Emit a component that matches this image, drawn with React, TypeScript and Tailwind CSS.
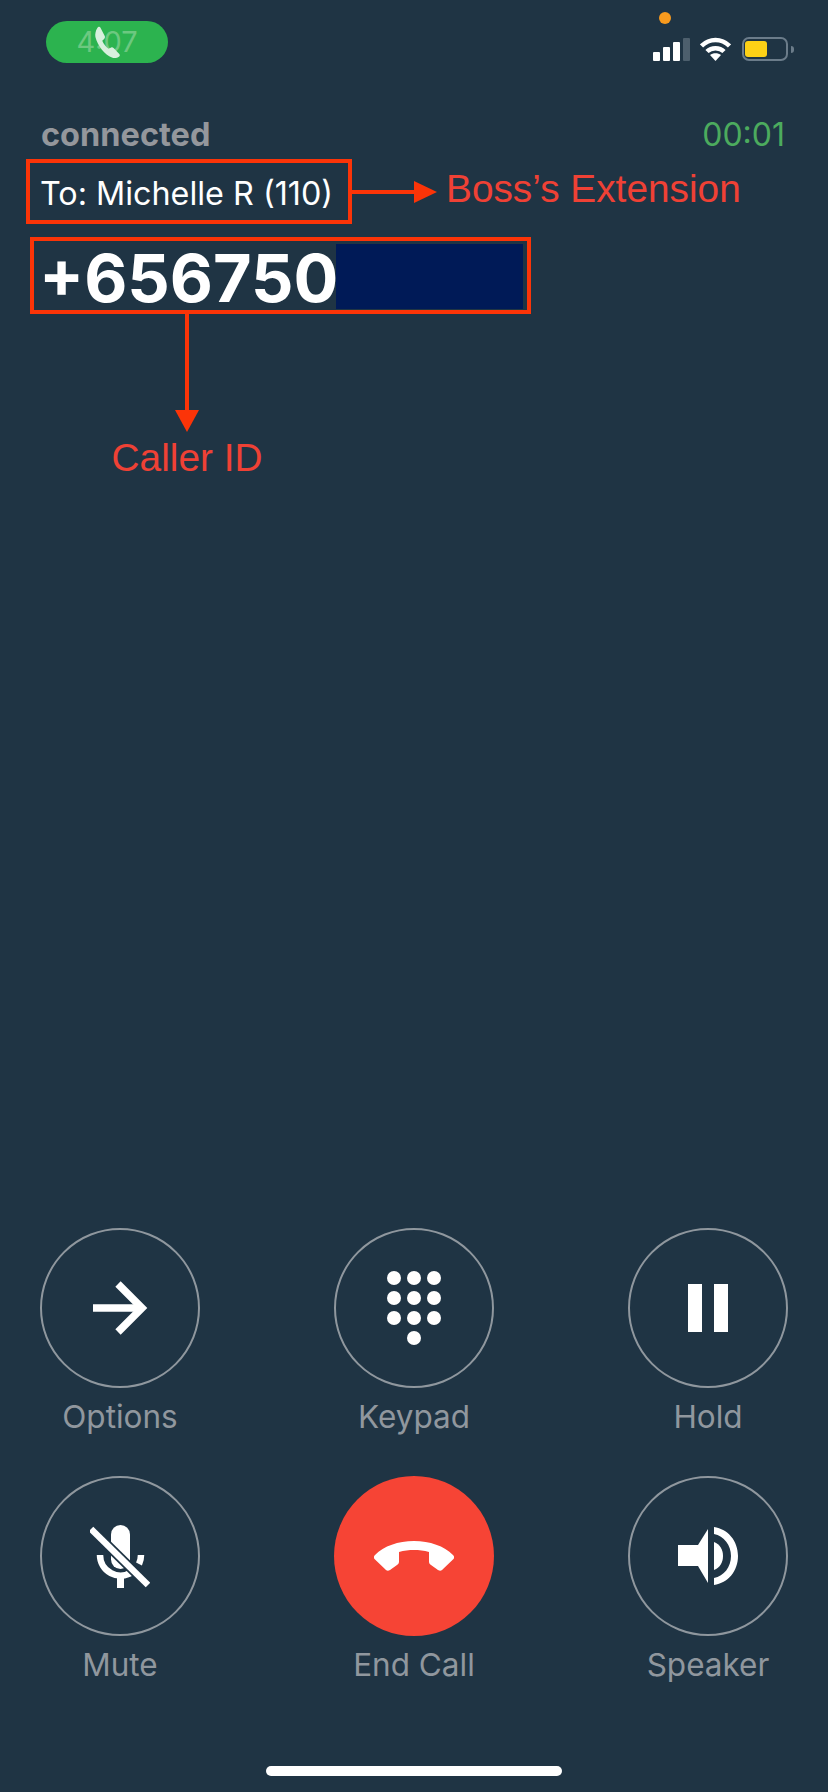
import type { ReactNode } from 'react'

const INTER = "font-['Inter','Liberation_Sans',sans-serif]"
const HELV = "font-['Liberation_Sans',Arial,sans-serif]"

function ArrowIcon() {
  return (
    <svg width="56" height="56" viewBox="0 0 56 56" fill="none" stroke="white" strokeWidth="7.5">
      <path d="M1 28h49" />
      <path d="M26 4l24 24-24 24" />
    </svg>
  )
}

function KeypadIcon() {
  const dots = [
    [7, 7], [27, 7], [47, 7],
    [7, 27], [27, 27], [47, 27],
    [7, 47], [27, 47], [47, 47],
    [27, 67],
  ]
  return (
    <svg width="54" height="74" viewBox="0 0 54 74" fill="white">
      {dots.map(([cx, cy]) => (
        <circle key={`${cx}-${cy}`} cx={cx} cy={cy} r="7" />
      ))}
    </svg>
  )
}

function PauseIcon() {
  return (
    <div className="flex gap-3">
      <div className="w-[14px] h-12 bg-white" />
      <div className="w-[14px] h-12 bg-white" />
    </div>
  )
}

function MuteIcon() {
  return (
    <svg width="60" height="68" viewBox="0 0 60 68">
      <rect x="21" y="3" width="19" height="44" rx="9.500" fill="white" />
      <path d="M10 33a20.500 20.500 0 0 0 32 17" fill="none" stroke="white" strokeWidth="6.500" />
      <path d="M51 33a20.500 20.500 0 0 1-2 9" fill="none" stroke="white" strokeWidth="6.500" />
      <rect x="27" y="52" width="7" height="14" fill="white" />
      <path d="M1 7l57 56" stroke="#1f3444" strokeWidth="10" fill="none" />
      <path d="M1 7l57 56" stroke="white" strokeWidth="6.500" fill="none" />
    </svg>
  )
}

function EndCallIcon() {
  return (
    <svg width="80" height="30" viewBox="0 0 80 30" fill="white">
      <path d="M1 14C10 5 24 0 40 0s30 5 39 14c1.500 1.500 1.500 3 .5 4L68 29c-1 1-2.500 1-4 0l-7-5c-1.500-1-2-2-2-3.500V11c-5-1.500-10-2-15-2s-10 .5-15 2v9.500c0 1.500-.5 2.500-2 3.500l-7 5c-1.500 1-3 1-4 0L.5 18c-1-1-1-2.500.5-4z" />
    </svg>
  )
}

function SpeakerIcon() {
  return (
    <svg width="62" height="60" viewBox="0 0 62 60" fill="white">
      <path d="M1 19h20L31 3v54L21 40H1z" />
      <path d="M37 16c6 2 9 8 9 14s-3 12-9 14z" />
      <path d="M37 1c14 2 24 14 24 29S51 57 37 59v-7c10-2 17-11 17-22S47 10 37 8z" />
    </svg>
  )
}

function SignalBars() {
  return (
    <div className="flex items-end gap-[3px]">
      <div className="w-[7px] h-[9px] rounded-[1px] bg-white" />
      <div className="w-[7px] h-[14px] rounded-[1px] bg-white" />
      <div className="w-[7px] h-[19px] rounded-[1px] bg-white" />
      <div className="w-[7px] h-[23px] rounded-[1px] bg-[#4d5f6d]" />
    </div>
  )
}

function WifiIcon() {
  return (
    <svg width="31" height="24" viewBox="0 0 31 24" fill="none" stroke="white" strokeWidth="4.500">
      <path d="M1.500 9C9.500 1 21.500 1 29.500 9" />
      <path d="M7 14.500C11.500 10 19.500 10 24 14.500" />
      <path d="M15.500 24l-5.500-6c3-2.500 8-2.500 11 0z" fill="white" stroke="none" />
    </svg>
  )
}

function CallButton({ icon, label, red }: { icon: ReactNode; label: string; red?: boolean }) {
  return (
    <div className="flex flex-col items-center w-[160px]">
      <div
        className={`w-[160px] h-[160px] rounded-full flex items-center justify-center ${
          red ? 'bg-[#f64435]' : 'border-2 border-[#8f979e]'
        }`}
      >
        {icon}
      </div>
      <span className={`mt-[10px] text-[31.5px] leading-[38px] whitespace-nowrap text-[#90979e] ${INTER}`}>{label}</span>
    </div>
  )
}

export default function App() {
  return (
    <div className={`relative w-[828px] h-[1792px] overflow-hidden bg-[#1f3444] flex flex-col ${INTER}`}>
      {/* status bar */}
      <div className="flex justify-between h-[80px] pt-3 pl-[46px] pr-[34px]">
        <div className="relative mt-[9px] w-[122px] h-[42px] rounded-[21px] bg-[#2cb34f] flex items-center justify-center">
          <span className="text-[29px] text-[#6cc880]">4:07</span>
          <svg className="absolute left-[45px] top-[5px]" width="33" height="33" viewBox="0 0 24 24" fill="#d8f0dd">
            <path d="M6.800 1l3.200 6.300c.3.700.2 1.400-.3 1.900l-1.500 1.500c.9 2.100 2.400 4.200 4.500 5.800l2-.9c.6-.2 1.200-.1 1.700.4l4.200 4.300c.5.600.5 1.300-.1 1.800-1.600 1.300-3.600 1.600-5.300.8C10 20.800 5 14.800 3.200 8c-.4-2 .2-4.600 1.400-6.500.5-.9 1.600-1.300 2.200-.5z" />
          </svg>
        </div>
        <div className="flex flex-col items-start">
          <div className="w-3 h-3 ml-[6px] rounded-full bg-[#f79a1e]" />
          <div className="flex items-end h-6 mt-[13px]">
            <SignalBars />
            <div className="ml-[10px]">
              <WifiIcon />
            </div>
            <div className="flex items-center ml-[11px]">
              <div className="w-[46px] h-6 rounded-[7px] border-2 border-[#6b7c8a] py-[2px] px-[1px]">
                <div className="w-[22px] h-full rounded-[3px] bg-[#fdd116]" />
              </div>
              <div className="w-[3px] h-[7px] ml-[3px] rounded-r-full bg-[#6b7c8a]" />
            </div>
          </div>
        </div>
      </div>

      {/* call info */}
      <div className="flex justify-between items-center h-[36px] mt-[37px] pl-[41px] pr-[43px]">
        <span className="text-[32.5px] font-bold text-[#94979c]">connected</span>
        <span className="text-[32px] text-[#4cab5e]">00:01</span>
      </div>

      <div className="flex items-center mt-[6px] ml-[26px]">
        <div className="w-[326px] h-[65px] border-4 border-[#fb3408] flex items-center pl-[10px] pt-[5px]">
          <span className="text-[32.3px] text-white whitespace-nowrap">To: Michelle R (110)</span>
        </div>
        <div className="w-[62px] h-1 bg-[#fb3408]" />
        <div className="w-0 h-0 border-y-[11px] border-y-transparent border-l-[23px] border-l-[#fb3408]" />
        <span className={`ml-[9px] -mt-[4px] text-[38.8px] text-[#ef4135] whitespace-nowrap ${HELV}`}>Boss’s Extension</span>
      </div>

      <div className="mt-[13px] ml-[30px] w-[501px] h-[77px] border-4 border-[#fb3408] flex items-stretch pt-[3px] pb-[1px] pr-[4px]">
        <div className="w-[302px] pl-[5px] pt-[3px] flex items-center">
          <span className="text-[66.5px] font-bold text-white leading-none">+656750</span>
        </div>
        <div className="flex-1 bg-[#001a57]" />
      </div>

      <div className="flex flex-col items-center w-[150px] ml-[112px]">
        <div className="w-1 h-[96px] bg-[#fb3408]" />
        <div className="w-0 h-0 border-x-[12px] border-x-transparent border-t-[22px] border-t-[#fb3408]" />
        <span className={`-mt-[3px] text-[38.8px] text-[#ef4135] whitespace-nowrap ${HELV}`}>Caller ID</span>
      </div>

      {/* buttons */}
      <div className="mt-auto mb-[82px] px-[40px] grid justify-between gap-y-[40px] grid-cols-[160px_160px_160px] gap-x-[134px]">
        <CallButton icon={<ArrowIcon />} label="Options" />
        <CallButton icon={<KeypadIcon />} label="Keypad" />
        <CallButton icon={<PauseIcon />} label="Hold" />
        <CallButton icon={<MuteIcon />} label="Mute" />
        <CallButton icon={<EndCallIcon />} label="End Call" red />
        <CallButton icon={<SpeakerIcon />} label="Speaker" />
      </div>

      {/* home indicator */}
      <div className="self-center w-[296px] h-[10px] mb-4 rounded-full bg-white" />
    </div>
  )
}
